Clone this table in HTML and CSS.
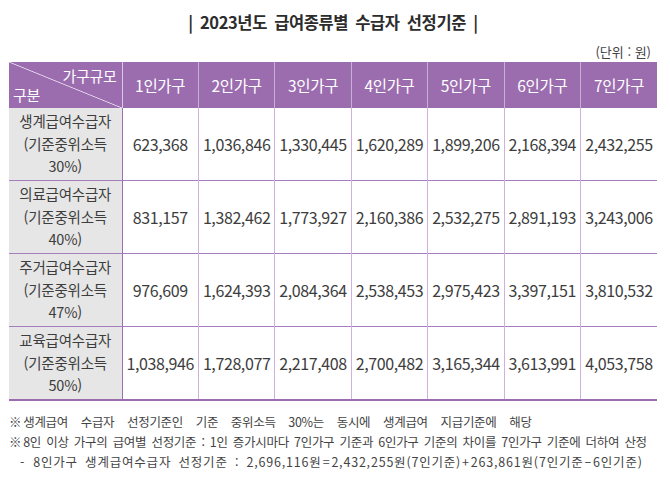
FILE: index.html
```html
<!DOCTYPE html>
<html lang="ko">
<head>
<meta charset="utf-8">
<link rel="stylesheet" href="styles.css">
</head>
<body>
<div class="page">
  <h1 class="title">| 2023년도 급여종류별 수급자 선정기준 |</h1>
  <div class="unit">(단위 : 원)</div>
  <table class="grid">
    <colgroup><col class="c-label"><col><col><col><col><col><col><col></colgroup>
    <thead>
      <tr>
        <th class="diag"><div class="diag-in"><span class="d-top">가구규모</span><span class="d-bot">구분</span></div></th>
        <th>1인가구</th><th>2인가구</th><th>3인가구</th><th>4인가구</th><th>5인가구</th><th>6인가구</th><th>7인가구</th>
      </tr>
    </thead>
    <tbody>
      <tr>
        <td class="lbl">생계급여수급자<br>(기준중위소득<br>30%)</td>
        <td>623,368</td><td>1,036,846</td><td>1,330,445</td><td>1,620,289</td><td>1,899,206</td><td>2,168,394</td><td>2,432,255</td>
      </tr>
      <tr>
        <td class="lbl">의료급여수급자<br>(기준중위소득<br>40%)</td>
        <td>831,157</td><td>1,382,462</td><td>1,773,927</td><td>2,160,386</td><td>2,532,275</td><td>2,891,193</td><td>3,243,006</td>
      </tr>
      <tr>
        <td class="lbl">주거급여수급자<br>(기준중위소득<br>47%)</td>
        <td>976,609</td><td>1,624,393</td><td>2,084,364</td><td>2,538,453</td><td>2,975,423</td><td>3,397,151</td><td>3,810,532</td>
      </tr>
      <tr>
        <td class="lbl">교육급여수급자<br>(기준중위소득<br>50%)</td>
        <td>1,038,946</td><td>1,728,077</td><td>2,217,408</td><td>2,700,482</td><td>3,165,344</td><td>3,613,991</td><td>4,053,758</td>
      </tr>
    </tbody>
  </table>
  <div class="notes">
    <p class="wide"><span class="mark">※</span>생계급여 수급자 선정기준인 기준 중위소득 30%는 동시에 생계급여 지급기준에 해당</p>
    <p><span class="mark">※</span>8인 이상 가구의 급여별 선정기준 : 1인 증가시마다 7인가구 기준과 6인가구 기준의 차이를 7인가구 기준에 더하여 산정</p>
    <p class="sub"><span class="dash">-</span>8인가구 생계급여수급자 선정기준 : 2,696,116원<span class="op">=</span>2,432,255원(7인기준)<span class="op">+</span>263,861원(7인기준<span class="op">–</span>6인기준)</p>
  </div>
</div>
</body>
</html>
```

FILE: styles.css
```css
html, body {
  margin: 0;
  padding: 0;
  background: #ffffff;
}
body {
  font-family: "Noto Sans CJK KR", "Noto Sans", sans-serif;
  color: #3d3d3d;
}
.page {
  width: 648px;
  padding: 9px 0 0 9px;
}
.title {
  margin: 0;
  height: 26px;
  line-height: 26px;
  font-size: 16.5px;
  font-weight: bold;
  text-align: center;
  color: #2c2c2c;
  letter-spacing: -0.4px;
  word-spacing: 3px;
}
.unit {
  height: 27px;
  line-height: 20px;
  padding-top: 7px;
  box-sizing: border-box;
  text-align: right;
  font-size: 13px;
  padding-right: 6px;
  color: #444;
}
.grid {
  width: 648px;
  border-collapse: collapse;
  table-layout: fixed;
}
.c-label { width: 113px; }
.grid th {
  height: 46px;
  padding: 0;
  background: #9b6daf;
  color: #ffffff;
  font-weight: normal;
  font-size: 15.5px;
  border-left: 1px solid #c7b0d4;
  text-align: center;
  letter-spacing: -0.3px;
}
.grid th.diag {
  border-left: none;
  border-right: 1px solid #d9c8e2;
  background-color: #9b6daf;
  background-image: linear-gradient(to top right, transparent calc(50% - 0.8px), #eadff0 50%, transparent calc(50% + 0.8px));
}
.diag-in {
  display: flex;
  flex-direction: column;
  height: 46px;
  padding: 4px 5px 2px 4px;
  box-sizing: border-box;
  font-size: 15px;
  line-height: 19px;
}
.d-top { text-align: right; }
.d-bot { text-align: left; }
.grid td {
  height: 72px;
  padding: 0;
  text-align: center;
  font-size: 16px;
  border-top: 1.5px solid #a57fbd;
  border-left: 1.5px solid #cfb1e0;
  letter-spacing: -0.4px;
}
.grid td.lbl {
  background: #e6e6e6;
  font-size: 14.5px;
  line-height: 22.5px;
  border-left: none;
  border-right: 1.5px solid #9a72b3;
  letter-spacing: -0.2px;
}
.grid tbody tr:first-child td { border-top: none; }
.grid tbody tr:last-child td { border-bottom: 2.5px solid #9b6daf; }
.notes {
  padding-top: 11px;
  font-size: 12.5px;
  color: #444;
  letter-spacing: -0.3px;
  word-spacing: 2px;
}
.notes p {
  margin: 0;
  height: 20px;
  line-height: 20px;
  white-space: nowrap;
}
.notes .mark { margin-right: 2px; }
.notes .wide { word-spacing: 9.5px; }
.notes .sub {
  padding-left: 11px;
  letter-spacing: 0.8px;
  word-spacing: 3px;
}
.notes .dash { margin-right: 8px; }
.notes .op { margin: 0 1px; }
```
